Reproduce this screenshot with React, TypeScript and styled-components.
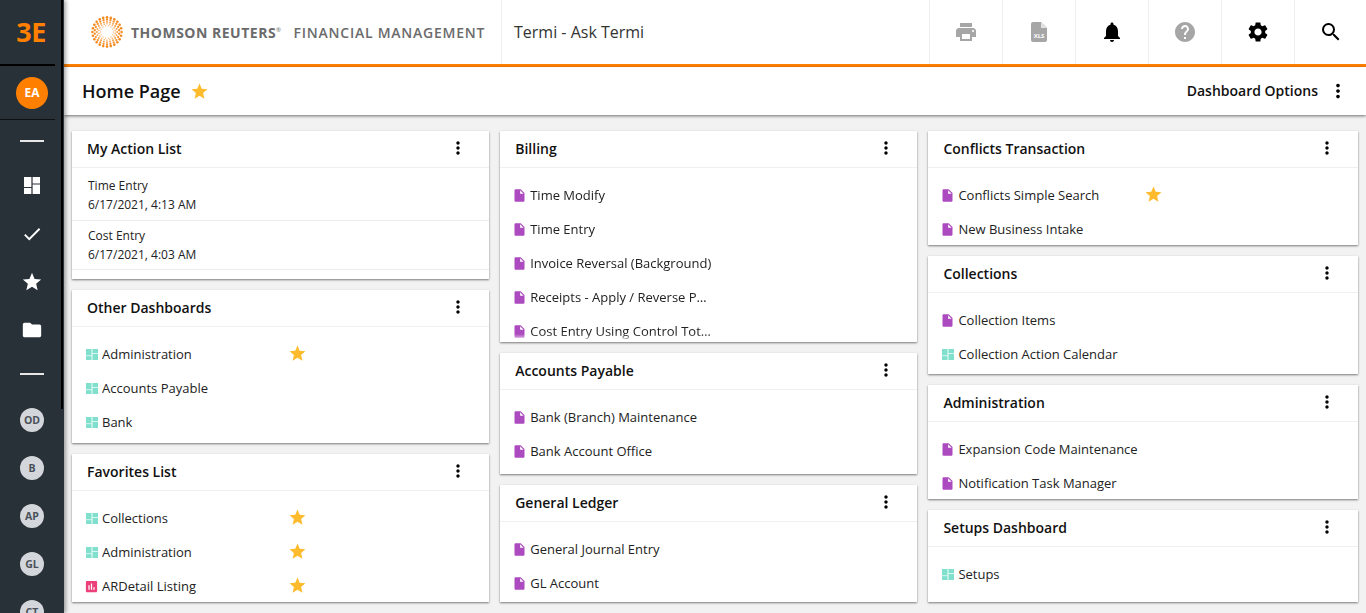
import styled, { createGlobalStyle } from "styled-components";
import {
  MdAssessment,
  MdCheck,
  MdFolder,
  MdHelp,
  MdInsertDriveFile,
  MdMoreVert,
  MdNotifications,
  MdPrint,
  MdSearch,
  MdSettings,
  MdStar,
} from "react-icons/md";

type Kind = "page" | "dash" | "report";

interface Entry {
  kind: Kind;
  name: string;
  fav?: boolean;
}

interface CardData {
  title: string;
  height: number;
  fade?: boolean;
  entries?: Entry[];
  actions?: { name: string; date: string }[];
}

const columns: { width: number; cards: CardData[] }[] = [
  {
    width: 417,
    cards: [
      {
        title: "My Action List",
        height: 148,
        actions: [
          { name: "Time Entry", date: "6/17/2021, 4:13 AM" },
          { name: "Cost Entry", date: "6/17/2021, 4:03 AM" },
        ],
      },
      {
        title: "Other Dashboards",
        height: 153,
        entries: [
          { kind: "dash", name: "Administration", fav: true },
          { kind: "dash", name: "Accounts Payable" },
          { kind: "dash", name: "Bank" },
        ],
      },
      {
        title: "Favorites List",
        height: 148,
        entries: [
          { kind: "dash", name: "Collections", fav: true },
          { kind: "dash", name: "Administration", fav: true },
          { kind: "report", name: "ARDetail Listing", fav: true },
        ],
      },
    ],
  },
  {
    width: 417,
    cards: [
      {
        title: "Billing",
        height: 211,
        fade: true,
        entries: [
          { kind: "page", name: "Time Modify" },
          { kind: "page", name: "Time Entry" },
          { kind: "page", name: "Invoice Reversal (Background)" },
          { kind: "page", name: "Receipts - Apply / Reverse Payments" },
          { kind: "page", name: "Cost Entry Using Control Totals" },
        ],
      },
      {
        title: "Accounts Payable",
        height: 121,
        entries: [
          { kind: "page", name: "Bank (Branch) Maintenance" },
          { kind: "page", name: "Bank Account Office" },
        ],
      },
      {
        title: "General Ledger",
        height: 117,
        entries: [
          { kind: "page", name: "General Journal Entry" },
          { kind: "page", name: "GL Account" },
        ],
      },
    ],
  },
  {
    width: 430,
    cards: [
      {
        title: "Conflicts Transaction",
        height: 114,
        entries: [
          { kind: "page", name: "Conflicts Simple Search", fav: true },
          { kind: "page", name: "New Business Intake" },
        ],
      },
      {
        title: "Collections",
        height: 118,
        entries: [
          { kind: "page", name: "Collection Items" },
          { kind: "dash", name: "Collection Action Calendar" },
        ],
      },
      {
        title: "Administration",
        height: 114,
        entries: [
          { kind: "page", name: "Expansion Code Maintenance" },
          { kind: "page", name: "Notification Task Manager" },
        ],
      },
      {
        title: "Setups Dashboard",
        height: 92,
        entries: [{ kind: "dash", name: "Setups" }],
      },
    ],
  },
];

const GlobalStyle = createGlobalStyle`
  html, body {
    margin: 0;
    height: 100%;
    overflow: hidden;
    font-family: "Open Sans", "Liberation Sans", sans-serif;
    color: #1a1a1a;
  }
  * { box-sizing: border-box; }
`;

const Shell = styled.div`
  display: flex;
  width: 1366px;
  height: 613px;
  overflow: hidden;
  background: #f2f2f2;
`;

const Sidebar = styled.nav`
  position: relative;
  z-index: 3;
  flex: 0 0 64px;
  height: 613px;
  overflow: hidden;
  background: #283038;
  box-shadow: 2px 0 4px rgba(0, 0, 0, 0.35);
`;

const SideScroll = styled.div`
  position: absolute;
  top: 0;
  right: 1px;
  width: 2px;
  height: 409px;
  background: #000;
`;

const Brand = styled.div`
  display: flex;
  align-items: center;
  justify-content: center;
  width: 55px;
  height: 66px;
  padding: 0 0 2px 7px;
  border-bottom: 2px solid #000;
  color: #ff8000;
  font-size: 27px;
  font-weight: 700;
  letter-spacing: -0.5px;
`;

const UserRow = styled.div`
  display: flex;
  align-items: center;
  justify-content: flex-start;
  width: 55px;
  height: 54px;
  padding-left: 16px;
  border-bottom: 1px solid #0d1114;
`;

const UserBadge = styled.div`
  display: flex;
  align-items: center;
  justify-content: center;
  width: 32px;
  height: 32px;
  border-radius: 50%;
  background: #ff8000;
  color: #fff;
  font-size: 12px;
  font-weight: 700;
`;

const SideRule = styled.div<{ $top: number; $bottom: number }>`
  width: 24px;
  height: 2px;
  margin: ${(p) => `${p.$top}px 0 ${p.$bottom}px 20px`};
  background: #e6e6e6;
`;

const SideIcon = styled.div`
  display: flex;
  align-items: center;
  justify-content: center;
  width: 64px;
  height: 48px;
  color: #fff;
  font-size: 22px;
`;

const SideDash = styled(SideIcon)`
  padding-bottom: 1px;
`;

const SideBadgeRow = styled.div`
  display: flex;
  align-items: center;
  justify-content: center;
  width: 64px;
  height: 48px;
`;

const SideBadge = styled.div`
  display: flex;
  align-items: center;
  justify-content: center;
  width: 24px;
  height: 24px;
  border-radius: 50%;
  background: #d3d7dc;
  color: #4a5058;
  font-size: 10.5px;
  font-weight: 700;
`;

const Main = styled.div`
  display: flex;
  flex: 1;
  flex-direction: column;
  min-width: 0;
`;

const TopBar = styled.header`
  display: flex;
  flex: 0 0 67px;
  align-items: stretch;
  border-bottom: 3px solid #ff8000;
  background: #fff;
`;

const LogoBlock = styled.div`
  display: flex;
  align-items: center;
  width: 438px;
  padding-left: 27px;
  border-right: 1px solid #eeeeee;
`;

const LogoMark = styled.svg`
  flex: 0 0 32px;
  width: 32px;
  height: 32px;
  margin-right: 8px;
`;

const LogoName = styled.span`
  color: #6b6b6b;
  font-size: 14px;
  font-weight: 700;
  letter-spacing: 0.5px;
  white-space: nowrap;
`;

const LogoSup = styled.sup`
  font-size: 6px;
  font-weight: 400;
  vertical-align: 6px;
  line-height: 0;
`;

const LogoProduct = styled.span`
  margin-left: 12px;
  color: #6b6b6b;
  font-size: 14px;
  font-weight: 600;
  letter-spacing: 0.75px;
  white-space: nowrap;
`;

const AppTitle = styled.div`
  display: flex;
  flex: 1;
  align-items: center;
  padding-left: 12px;
  color: #333;
  font-size: 16px;
`;

const ToolCell = styled.div<{ $muted?: boolean; $width?: number }>`
  display: flex;
  align-items: center;
  justify-content: center;
  width: ${(p) => p.$width ?? 73}px;
  border-left: 1px solid #eeeeee;
  color: ${(p) => (p.$muted ? "#a6a6a6" : "#000")};
  font-size: 24px;
`;

const SubBar = styled.div`
  position: relative;
  z-index: 2;
  display: flex;
  flex: 0 0 48px;
  align-items: center;
  padding: 0 17px 0 18px;
  background: #fff;
  box-shadow: 0 1px 3px rgba(0, 0, 0, 0.55);
`;

const PageTitle = styled.h1`
  margin: 0 9px 0 0;
  color: #111;
  font-size: 18px;
  font-weight: 600;
`;

const Fav = styled(MdStar)`
  flex: none;
  color: #fdbb2d;
  font-size: 19px;
`;

const RowFav = styled(Fav)`
  margin: 0 0 2px 4px;
`;

const OptionsLabel = styled.span`
  margin: 0 0 2px auto;
  color: #111;
  font-size: 14px;
  font-weight: 600;
`;

const Kebab = styled(MdMoreVert)`
  flex: none;
  color: #000;
  font-size: 20px;
`;

const SubKebab = styled(Kebab)`
  margin-left: 9px;
  font-size: 22px;
`;

const Board = styled.main`
  display: flex;
  flex: 1;
  gap: 11.2px;
  padding: 16px 0 0 8px;
  overflow: hidden;
`;

const Column = styled.div<{ $width: number }>`
  display: flex;
  flex: 0 0 ${(p) => p.$width}px;
  flex-direction: column;
  gap: 11px;
`;

const Card = styled.section<{ $height: number }>`
  display: flex;
  flex: 0 0 ${(p) => p.$height}px;
  flex-direction: column;
  overflow: hidden;
  background: #fff;
  box-shadow: 0 1px 2px rgba(0, 0, 0, 0.5);
`;

const CardHead = styled.div`
  display: flex;
  flex: 0 0 37px;
  align-items: center;
  justify-content: space-between;
  padding: 0 21px 2px 15px;
  border-bottom: 1px solid #f0f0f0;
`;

const CardTitle = styled.h2`
  margin: 0;
  color: #111;
  font-size: 14px;
  font-weight: 600;
`;

const CardList = styled.ul<{ $fade?: boolean }>`
  flex: 1;
  margin: 0;
  padding: 10px 0 0 14px;
  overflow: hidden;
  list-style: none;
  mask-image: ${(p) => (p.$fade ? "linear-gradient(#000 calc(100% - 8px), transparent)" : "none")};
`;

const EntryRow = styled.li`
  display: flex;
  align-items: center;
  height: 34px;
`;

const KindIcon = styled.span<{ $kind: Kind }>`
  display: flex;
  flex: 0 0 16px;
  align-items: center;
  font-size: 15px;
  color: ${(p) => (p.$kind === "page" ? "#ac4abf" : p.$kind === "dash" ? "#80e0cd" : "#ec407a")};
  svg {
    margin-left: ${(p) => (p.$kind === "dash" ? 0 : -2.5)}px;
  }
`;

const EntryName = styled.span`
  flex: 0 0 182px;
  overflow: hidden;
  color: #222;
  font-size: 13px;
  text-overflow: ellipsis;
  white-space: nowrap;
`;

const ActionRow = styled.div`
  display: flex;
  flex-direction: column;
  justify-content: center;
  gap: 5px;
  height: 49px;
  padding: 1px 0 0 16px;
  border-bottom: 1px solid #ececec;
  color: #222;
  font-size: 12px;
  line-height: 14px;
  &:nth-child(2) {
    height: 53px;
    padding-top: 2px;
  }
`;

// Four blocks with hairline gaps, the dashboard glyph of the app
const DashGlyph = ({ size, height }: { size: number; height: number }) => (
  <svg width={size} height={height} viewBox="0 0 16 17" fill="currentColor" preserveAspectRatio="none">
    <rect x="0" y="0" width="7.4" height="10" />
    <rect x="0" y="11" width="7.4" height="6" />
    <rect x="8.6" y="0" width="7.4" height="6.5" />
    <rect x="8.6" y="7.5" width="7.4" height="9.5" />
  </svg>
);

const entryIcon = (kind: Kind) => {
  if (kind === "dash") return <DashGlyph size={12} height={11} />;
  if (kind === "report") return <MdAssessment />;
  return <MdInsertDriveFile />;
};

// Rings of dots, the Thomson Reuters mark
const logoDots = [
  { r: 6.4, n: 14, size: 0.65, alpha: 0.6 },
  { r: 8.2, n: 18, size: 0.8, alpha: 0.7 },
  { r: 10.1, n: 20, size: 0.95, alpha: 0.85 },
  { r: 12.3, n: 22, size: 1.15, alpha: 0.95 },
  { r: 14.6, n: 24, size: 1.3, alpha: 1 },
].flatMap((ring, ringIndex) =>
  Array.from({ length: ring.n }, (_, i) => {
    const angle = ((i + (ringIndex % 2) / 2) / ring.n) * Math.PI * 2;
    return {
      x: 16 + ring.r * Math.cos(angle),
      y: 16 + ring.r * Math.sin(angle),
      size: ring.size,
      alpha: ring.alpha,
    };
  })
);

const App = () => {
  return (
    <Shell>
      <GlobalStyle />
      <Sidebar>
        <Brand>3E</Brand>
        <UserRow>
          <UserBadge>EA</UserBadge>
        </UserRow>
        <SideRule $top={20} $bottom={20} />
        <SideDash>
          <DashGlyph size={16} height={17} />
        </SideDash>
        <SideIcon>
          <MdCheck />
        </SideIcon>
        <SideIcon>
          <MdStar />
        </SideIcon>
        <SideIcon>
          <MdFolder />
        </SideIcon>
        <SideRule $top={19} $bottom={21} />
        {["OD", "B", "AP", "GL", "CT"].map((label) => (
          <SideBadgeRow key={label}>
            <SideBadge>{label}</SideBadge>
          </SideBadgeRow>
        ))}
        <SideScroll />
      </Sidebar>

      <Main>
        <TopBar>
          <LogoBlock>
            <LogoMark viewBox="0 0 32 32">
              {logoDots.map((dot, i) => (
                <circle key={i} cx={dot.x} cy={dot.y} r={dot.size} fill="#f58a1f" opacity={dot.alpha} />
              ))}
            </LogoMark>
            <LogoName>
              THOMSON REUTERS<LogoSup>®</LogoSup>
            </LogoName>
            <LogoProduct>FINANCIAL MANAGEMENT</LogoProduct>
          </LogoBlock>
          <AppTitle>Termi - Ask Termi</AppTitle>
          <ToolCell $muted>
            <MdPrint />
          </ToolCell>
          <ToolCell $muted>
            <svg width="16" height="20" viewBox="0 0 16 20">
              <path d="M2 0h8l6 6v12a2 2 0 0 1-2 2H2a2 2 0 0 1-2-2V2a2 2 0 0 1 2-2z" fill="#a6a6a6" />
              <path d="M10 0l6 6h-6z" fill="#e2e2e2" />
              <text x="8" y="15.5" fontSize="6" fontWeight="700" textAnchor="middle" fill="#fff" fontFamily="Open Sans">
                XLS
              </text>
            </svg>
          </ToolCell>
          <ToolCell>
            <MdNotifications />
          </ToolCell>
          <ToolCell $muted>
            <MdHelp />
          </ToolCell>
          <ToolCell>
            <MdSettings />
          </ToolCell>
          <ToolCell $width={72}>
            <MdSearch />
          </ToolCell>
        </TopBar>

        <SubBar>
          <PageTitle>Home Page</PageTitle>
          <Fav />
          <OptionsLabel>Dashboard Options</OptionsLabel>
          <SubKebab />
        </SubBar>

        <Board>
          {columns.map((column) => (
            <Column key={column.cards[0].title} $width={column.width}>
              {column.cards.map((card) => (
                <Card key={card.title} $height={card.height}>
                  <CardHead>
                    <CardTitle>{card.title}</CardTitle>
                    <Kebab />
                  </CardHead>
                  {card.actions?.map((action) => (
                    <ActionRow key={action.name}>
                      <span>{action.name}</span>
                      <span>{action.date}</span>
                    </ActionRow>
                  ))}
                  {card.entries && (
                    <CardList $fade={card.fade}>
                      {card.entries.map((entry) => (
                        <EntryRow key={entry.name}>
                          <KindIcon $kind={entry.kind}>{entryIcon(entry.kind)}</KindIcon>
                          <EntryName>{entry.name}</EntryName>
                          {entry.fav && <RowFav />}
                        </EntryRow>
                      ))}
                    </CardList>
                  )}
                </Card>
              ))}
            </Column>
          ))}
        </Board>
      </Main>
    </Shell>
  );
};

export default App;
